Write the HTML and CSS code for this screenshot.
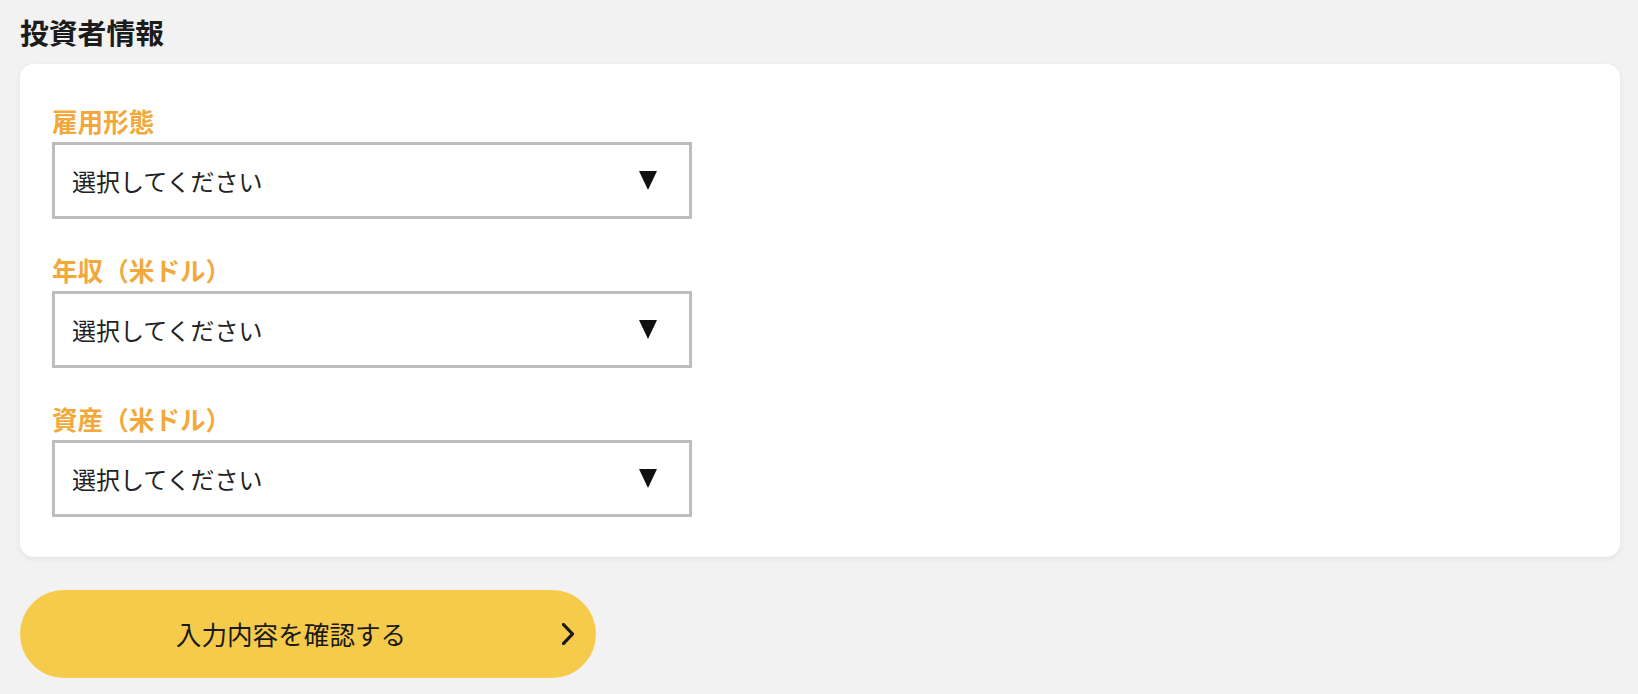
FILE: index.html
```html
<!DOCTYPE html>
<html lang="ja">
<head>
<meta charset="utf-8">
<title>投資者情報</title>
<link rel="stylesheet" href="styles.css">
</head>
<body>
<main class="page">
  <h2 class="section-title">投資者情報</h2>
  <section class="card">
    <div class="field">
      <label class="field-label">雇用形態</label>
      <div class="select">
        <span class="select-text">選択してください</span>
        <svg class="select-arrow" width="18" height="19" viewBox="0 0 18 19"><polygon points="0,0 18,0 9,19" fill="#111"/></svg>
      </div>
    </div>
    <div class="field">
      <label class="field-label">年収（米ドル）</label>
      <div class="select">
        <span class="select-text">選択してください</span>
        <svg class="select-arrow" width="18" height="19" viewBox="0 0 18 19"><polygon points="0,0 18,0 9,19" fill="#111"/></svg>
      </div>
    </div>
    <div class="field">
      <label class="field-label">資産（米ドル）</label>
      <div class="select">
        <span class="select-text">選択してください</span>
        <svg class="select-arrow" width="18" height="19" viewBox="0 0 18 19"><polygon points="0,0 18,0 9,19" fill="#111"/></svg>
      </div>
    </div>
  </section>
  <button class="submit" type="button">
    <span class="submit-text">入力内容を確認する</span>
    <svg class="submit-chevron" width="12" height="22" viewBox="0 0 12 22"><polyline points="1.5,1.5 10.5,11 1.5,20.5" fill="none" stroke="#1a1a1a" stroke-width="3.2" stroke-linecap="square" stroke-linejoin="miter"/></svg>
  </button>
</main>
</body>
</html>
```
FILE: styles.css
```css
html, body {
  margin: 0;
  padding: 0;
}
body {
  background: #f2f2f2;
  font-family: "Noto Sans CJK JP", "Noto Sans", sans-serif;
  color: #1a1a1a;
}
.page {
  padding: 12px 18px 0 20px;
}
.section-title {
  margin: 0 0 12px;
  font-size: 28.8px;
  line-height: 40px;
  font-weight: 700;
  color: #1c1c1c;
}
.card {
  background: #fff;
  border-radius: 14px;
  box-shadow: 0 2px 6px rgba(0, 0, 0, 0.07);
  padding: 40px 32px 40px 32px;
  display: flex;
  flex-direction: column;
  gap: 34px;
}
.field {
  display: flex;
  flex-direction: column;
  gap: 4px;
}
.field-label {
  font-size: 25.6px;
  line-height: 34px;
  font-weight: 700;
  color: #f2a83a;
}
.select {
  box-sizing: border-box;
  width: 640px;
  height: 77px;
  border: 3px solid #bdbdbd;
  background: #fff;
  display: flex;
  align-items: center;
  justify-content: space-between;
  padding: 0 32px 0 17px;
}
.select-text {
  font-size: 24px;
  line-height: 34px;
  color: #222;
}
.select-arrow {
  display: block;
}
.submit {
  margin-top: 33px;
  box-sizing: border-box;
  width: 576px;
  height: 88px;
  border: none;
  border-radius: 44px;
  background: #f6cb4c;
  display: flex;
  align-items: center;
  padding: 0 22px 0 20px;
  gap: 20px;
  font-family: inherit;
  cursor: pointer;
}
.submit-text {
  flex: 1;
  text-align: center;
  font-size: 25.6px;
  line-height: 34px;
  color: #1a1a1a;
}
.submit-chevron {
  display: block;
}
```
